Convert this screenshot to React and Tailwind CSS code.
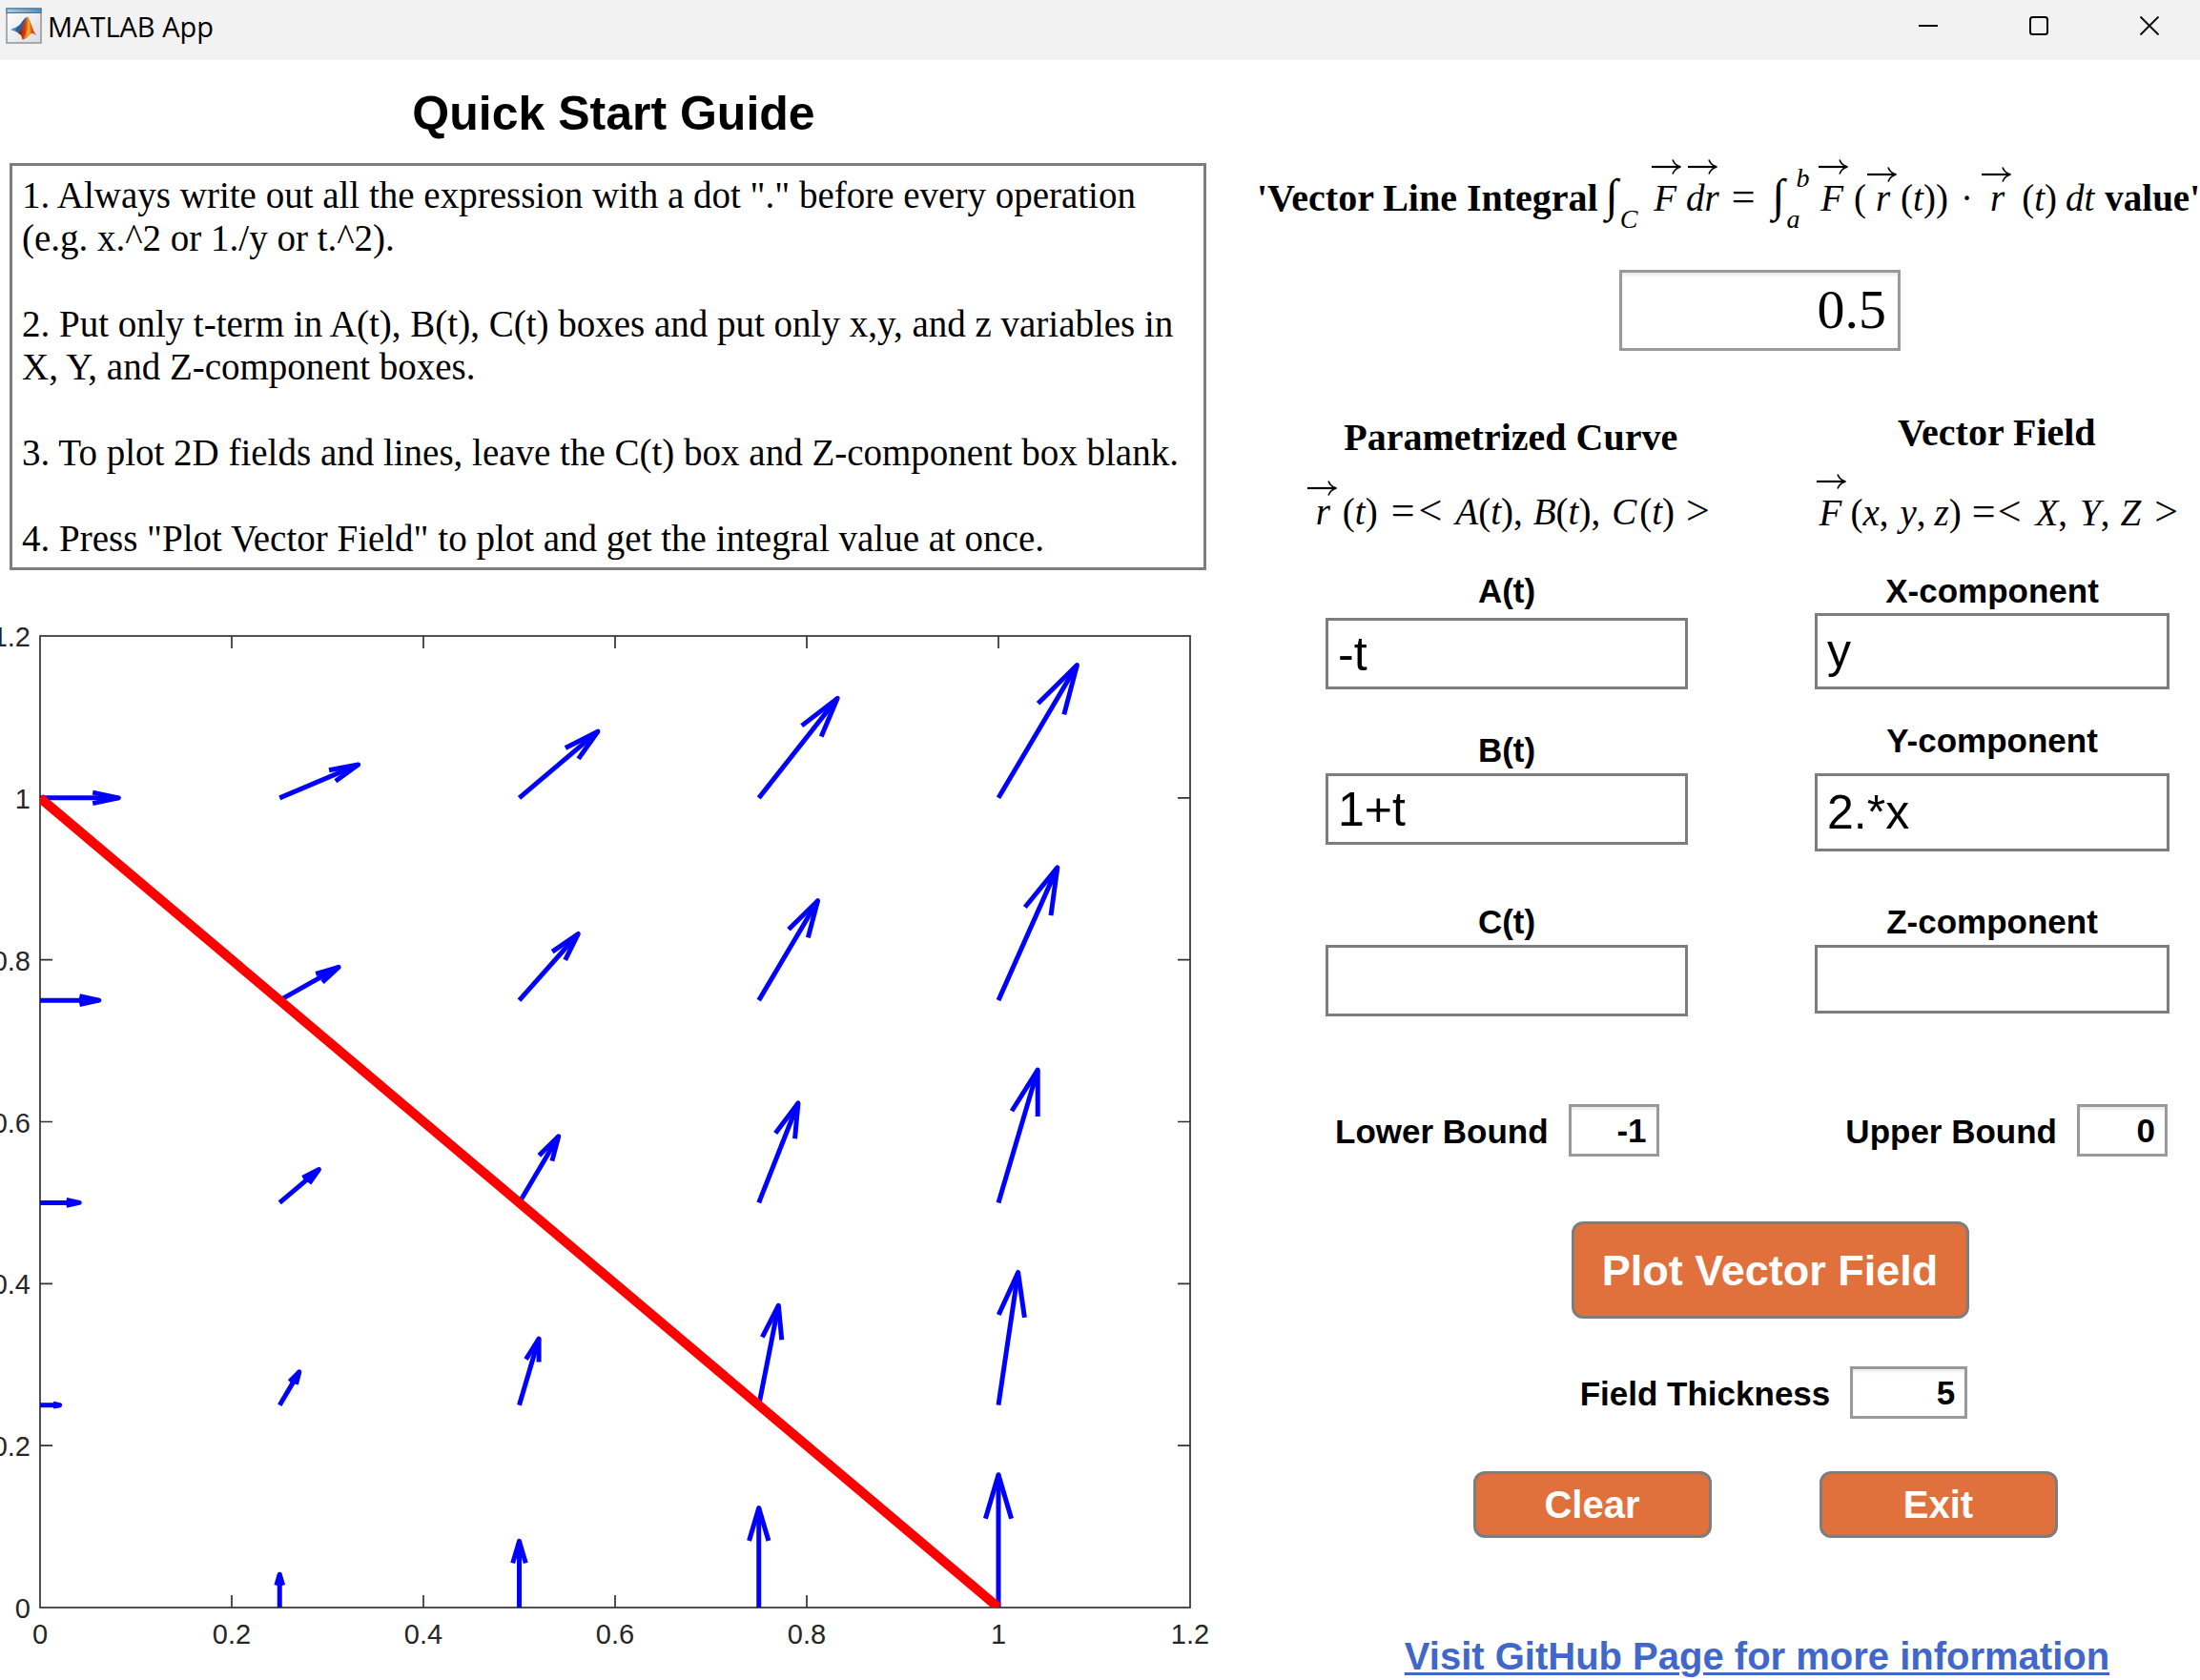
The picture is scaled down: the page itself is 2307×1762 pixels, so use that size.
import React from "react";

const SERIF = "font-['Liberation_Serif','Times_New_Roman',serif]";
const SANS = "font-['Liberation_Sans',Arial,sans-serif]";

const GUIDE = `1. Always write out all the expression with a dot "." before every operation (e.g. x.^2 or 1./y or t.^2).

2. Put only t-term in A(t), B(t), C(t) boxes and put only x,y, and z variables in X, Y, and Z-component boxes.

3. To plot 2D fields and lines, leave the C(t) box and Z-component box blank.

4. Press "Plot Vector Field" to plot and get the integral value at once.`;

function MatlabIcon() {
  return (
    <svg width="38" height="38" viewBox="0 0 38 38" aria-hidden="true">
      <defs>
        <linearGradient id="paper" x1="0" y1="0" x2="1" y2="1">
          <stop offset="0" stopColor="#ffffff" />
          <stop offset="1" stopColor="#dcdcdc" />
        </linearGradient>
        <linearGradient id="bar" x1="0" y1="0" x2="1" y2="0">
          <stop offset="0" stopColor="#a9d0ea" />
          <stop offset="1" stopColor="#4f8fc2" />
        </linearGradient>
        <linearGradient id="flame" x1="0" y1="0" x2="1" y2="0">
          <stop offset="0" stopColor="#7a1a10" />
          <stop offset="0.4" stopColor="#d8401a" />
          <stop offset="0.6" stopColor="#f6a21c" />
          <stop offset="0.75" stopColor="#e2541b" />
          <stop offset="1" stopColor="#a82a12" />
        </linearGradient>
      </defs>
      <rect x="1" y="1" width="36" height="36" fill="url(#paper)" stroke="#8f9499" strokeWidth="1.5" />
      <rect x="1" y="1" width="36" height="4.5" fill="url(#bar)" stroke="#3f6f96" strokeWidth="1" />
      <path d="M5 23 L12 20 C15 19 17 14 21 10 L19 19 L14 27 L11 25.500 Z" fill="#4a90c8" />
      <path d="M12 20 C15 19 18 13 22.500 9.500 L18 22 L13.500 26.500 L10 24 Z" fill="#2d5f94" />
      <path d="M13 27 C17 24 19 14 23 9.500 C26 12 28 24 32 29 C29 27 27 26 25 29 C22 31 20 34 17.500 33.500 C17 30 16 28 13 27 Z" fill="url(#flame)" />
      <path d="M23 10 C24 17 24 24 18 33 C21 33 23 29 25.500 28 C25 22 25 16 23 10 Z" fill="#f8b62a" opacity="0.55" />
    </svg>
  );
}

function TitleBar() {
  return (
    <header className="flex h-[63px] items-center justify-between bg-[#f2f2f2] pb-[9px] pl-[6px] pr-[43px]">
      <div className="flex items-center gap-[6px]">
        <MatlabIcon />
        <span className="pt-0.5 font-['Open_Sans','Noto_Sans',sans-serif] text-[29px] leading-[38px] text-black">MATLAB App</span>
      </div>
      <div className="flex items-center gap-24">
        <button type="button" aria-label="Minimize">
          <svg className="block" width="20" height="20" viewBox="0 0 20 20">
            <path d="M0 10H20" stroke="#000" strokeWidth="2" />
          </svg>
        </button>
        <button type="button" aria-label="Maximize">
          <svg className="block" width="20" height="20" viewBox="0 0 20 20">
            <rect x="1" y="1" width="18" height="18" rx="2.500" fill="none" stroke="#000" strokeWidth="2" />
          </svg>
        </button>
        <button type="button" aria-label="Close">
          <svg className="block" width="20" height="20" viewBox="0 0 20 20">
            <path d="M0.500 0.500L19.500 19.500M19.500 0.500L0.500 19.500" stroke="#111" strokeWidth="2" />
          </svg>
        </button>
      </div>
    </header>
  );
}

/* Vector field plot: F = <y, 2x> on a 5x5 grid, with the curve r(t) = <-t, 1+t> */
const LEFT = 42;
const RIGHT = 1248;
const TOP = 57;
const BOTTOM = 1076;
const px = (x) => LEFT + (x * (RIGHT - LEFT)) / 1.2;
const py = (y) => BOTTOM - (y * (BOTTOM - TOP)) / 1.2;
const TICKS = [0, 0.2, 0.4, 0.6, 0.8, 1, 1.2];
const GRID = [0, 0.25, 0.5, 0.75, 1];
const SCALE = 0.082;
const HEAD = 0.33;
const SPREAD = 0.25;

function Arrow({ x, y }) {
  const u = y * SCALE;
  const v = 2 * x * SCALE;
  const tx = x + u;
  const ty = y + v;
  const ax = tx - HEAD * (u + SPREAD * v);
  const ay = ty - HEAD * (v - SPREAD * u);
  const bx = tx - HEAD * (u - SPREAD * v);
  const by = ty - HEAD * (v + SPREAD * u);
  return (
    <g>
      <path d={`M${px(x)} ${py(y)}L${px(tx)} ${py(ty)}`} />
      <path d={`M${px(ax)} ${py(ay)}L${px(tx)} ${py(ty)}L${px(bx)} ${py(by)}`} />
    </g>
  );
}

function Plot() {
  return (
    <svg className={`mt-3 block w-full text-[29px] ${SANS}`} viewBox="0 0 1275 1130" role="img" aria-label="Vector field plot">
      <defs>
        <clipPath id="axes">
          <rect x={LEFT} y={TOP} width={RIGHT - LEFT} height={BOTTOM - TOP} />
        </clipPath>
      </defs>
      <g stroke="#333333" strokeWidth="1.7" fill="none">
        <rect x={LEFT} y={TOP} width={RIGHT - LEFT} height={BOTTOM - TOP} />
        {TICKS.slice(1, -1).map((t) => (
          <path
            key={t}
            d={`M${px(t)} ${BOTTOM}v-13M${px(t)} ${TOP}v13M${LEFT} ${py(t)}h13M${RIGHT} ${py(t)}h-13`}
          />
        ))}
      </g>
      <g fill="#262626">
        {TICKS.map((t) => (
          <text key={t} x={px(t)} y={1114} textAnchor="middle">{t}</text>
        ))}
        {TICKS.map((t) => (
          <text key={t} x={32} y={py(t) + 11} textAnchor="end">{t}</text>
        ))}
      </g>
      <g clipPath="url(#axes)">
        <g stroke="#0000ff" strokeWidth="5" fill="none" strokeLinejoin="round">
          {GRID.flatMap((x) =>
            GRID.filter((y) => x || y).map((y) => <Arrow key={`${x},${y}`} x={x} y={y} />)
          )}
        </g>
        <path d={`M${px(0)} ${py(1)}L${px(1)} ${py(0)}`} stroke="#ff0000" strokeWidth="10" />
      </g>
    </svg>
  );
}

function OverArrow({ className }) {
  return (
    <svg className={`absolute ${className}`} width="31" height="16" viewBox="0 0 31 16" aria-hidden="true">
      <path d="M0 8H29" stroke="#000" strokeWidth="2.200" fill="none" />
      <path d="M22 0.500C23.500 4.500 26 7 30.500 8C26 9 23.500 11.500 22 15.500" stroke="#000" strokeWidth="1.600" fill="none" />
    </svg>
  );
}

function VecF({ className = "" }) {
  return (
    <i className={`relative inline-block ${className}`}>
      F
      <OverArrow className="-left-0.5 -top-[11px]" />
    </i>
  );
}

function VecR({ className = "" }) {
  return (
    <i className={`relative inline-block ${className}`}>
      r
      <OverArrow className="-left-[9px] -top-[3px]" />
    </i>
  );
}

function OfT({ className = "", after = "" }) {
  return (
    <span className={className}>
      (<i>t</i>){after}
    </span>
  );
}

function Op({ className = "", children }) {
  return <span className={`text-[44px] leading-none ${className}`}>{children}</span>;
}

function Integral({ lower, upper, className = "" }) {
  return (
    <span className={`relative inline-block w-[61px] ${className}`}>
      <i className="pl-[10px] text-[48px] leading-none">∫</i>
      <i className="absolute left-[25px] top-[36px] text-[28px] leading-[32px]">{lower}</i>
      {upper && <i className="absolute left-[35px] -top-[7px] text-[28px] leading-[32px]">{upper}</i>}
    </span>
  );
}

const formula = `flex items-baseline whitespace-nowrap text-[39px] leading-[60px] ${SERIF}`;

function LineIntegralTitle() {
  return (
    <div className={`mt-[115px] h-[60px] pl-[43px] ${formula}`}>
      <b className="text-[40px]">'Vector Line Integral</b>
      <Integral lower="C" className="-ml-0.5" />
      <VecF className="w-[34px]" />
      <i className="relative">
        dr
        <OverArrow className="left-0.5 -top-[11px]" />
      </i>
      <Op className="ml-[13px]">=</Op>
      <Integral lower="a" upper="b" className="ml-2" />
      <VecF className="w-[35px]" />
      <span>(</span>
      <VecR className="ml-[10px]" />
      <OfT className="ml-[11px]" after=")" />
      <span className="ml-[13px]">·</span>
      <VecR className="ml-[18px]" />
      <OfT className="ml-[18px]" />
      <i className="ml-[9px]">dt</i>
      <b className="ml-[11px]">value'</b>
    </div>
  );
}

const textInput = "w-full rounded-none border-[3px] border-[#7d7d7d] bg-white px-[10px] text-[50px] leading-[60px] text-black outline-none";

function Field({ id, label, value, labelClass = "", inputClass }) {
  return (
    <>
      <label htmlFor={id} className={`text-center text-[35px] font-bold leading-[40px] ${labelClass}`}>{label}</label>
      <input id={id} type="text" defaultValue={value} className={`${textInput} ${inputClass}`} />
    </>
  );
}

function NumberField({ id, label, value, width }) {
  return (
    <div className="flex items-center gap-[21px]">
      <label htmlFor={id} className="whitespace-nowrap pt-0.5 text-[35px] font-bold leading-[40px]">{label}</label>
      <input
        id={id}
        type="text"
        inputMode="numeric"
        defaultValue={value}
        className={`h-[55px] rounded-none border-[3px] border-[#999999] bg-white pr-[10px] text-right text-[35px] font-bold leading-[40px] shadow-[inset_0_3px_3px_rgba(0,0,0,0.08)] outline-none ${width}`}
      />
    </div>
  );
}

const button = "rounded-xl border-[3px] border-[#7d7d7d] bg-[#e0713c] font-bold text-white";

export default function App() {
  return (
    <div className={`min-h-screen overflow-hidden bg-white text-black ${SANS}`}>
      <TitleBar />
      <main className="grid grid-cols-[1275fr_1032fr]">
        <section className="min-w-0">
          <h1 className="mt-[26px] pl-3 text-center text-[50px] font-bold leading-[60px]">Quick Start Guide</h1>
          <div className="mt-[22px] px-[10px]">
            <textarea
              readOnly
              rows={9}
              aria-label="Quick Start Guide"
              defaultValue={GUIDE}
              className={`block w-full resize-none overflow-hidden rounded-none border-[3px] border-[#7d7d7d] bg-white p-2 pl-[10px] text-[39px] leading-[45px] text-black outline-none ${SERIF}`}
            />
          </div>
          <Plot />
        </section>

        <section className="min-w-0">
          <LineIntegralTitle />

          <div className="mt-[45px] flex justify-center pl-[109px]">
            <input
              type="text"
              readOnly
              aria-label="Vector line integral value"
              defaultValue="0.5"
              className={`h-[85px] w-[295px] rounded-none border-[3px] border-[#999999] bg-white pb-0.5 pr-3 text-right text-[58px] leading-[64px] shadow-[inset_0_3px_3px_rgba(0,0,0,0.08)] outline-none ${SERIF}`}
            />
          </div>

          <div className="mt-[63px] grid grid-cols-[380fr_372fr] gap-x-[133px] pl-[119px] pr-[27px]">
            <div className="flex min-w-0 flex-col items-center pt-[5px]">
              <h2 className={`whitespace-nowrap text-[40px] font-bold leading-[46px] ${SERIF}`}>Parametrized Curve</h2>
              <div className={`mt-[25px] pl-1 ${formula}`}>
                <VecR />
                <OfT className="ml-[13px]" />
                <Op className="ml-[14px]">=</Op>
                <Op className="ml-1">&lt;</Op>
                <i className="ml-[14px]">A</i>
                <OfT after="," />
                <i className="ml-[11px]">B</i>
                <OfT after="," />
                <i className="ml-[12px]">C</i>
                <OfT className="ml-[3px]" />
                <Op className="ml-[12px]">&gt;</Op>
              </div>
            </div>
            <div className="flex min-w-0 flex-col items-center">
              <h2 className={`whitespace-nowrap text-[40px] font-bold leading-[46px] ${SERIF}`}>Vector Field</h2>
              <div className={`mt-[31px] pl-1 ${formula}`}>
                <VecF className="w-[33px]" />
                <span>(</span>
                <i>x</i>
                <span>,</span>
                <i className="ml-[12px]">y</i>
                <span>,</span>
                <i className="ml-[9px]">z</i>
                <span>)</span>
                <Op className="ml-[11px]">=</Op>
                <Op className="ml-0.5">&lt;</Op>
                <i className="ml-[15px]">X</i>
                <span>,</span>
                <i className="ml-[13px]">Y</i>
                <span>,</span>
                <i className="ml-[11px]">Z</i>
                <Op className="ml-[14px]">&gt;</Op>
              </div>
            </div>
          </div>

          <div className="mt-8 grid grid-cols-[380fr_372fr] gap-x-[133px] pl-[115px] pr-[32px]">
            <div className="flex flex-col">
              <Field id="a" label="A(t)" value="-t" inputClass="mt-2 h-[75px]" />
              <Field id="b" label="B(t)" value="1+t" labelClass="mt-11" inputClass="mt-1 h-[75px]" />
              <Field id="c" label="C(t)" value="" labelClass="mt-[61px]" inputClass="mt-1 h-[75px]" />
            </div>
            <div className="flex flex-col">
              <Field id="x" label="X-component" value="y" inputClass="mt-[3px] h-[80px]" />
              <Field id="y" label="Y-component" value="2.*x" labelClass="mt-[34px]" inputClass="mt-[14px] h-[82px]" />
              <Field id="z" label="Z-component" value="" labelClass="mt-[54px]" inputClass="mt-1 h-[72px]" />
            </div>
          </div>

          <div className="mt-[92px] flex justify-between pl-[125px] pr-[34px]">
            <NumberField id="lower" label="Lower Bound" value="-1" width="w-[95px]" />
            <NumberField id="upper" label="Upper Bound" value="0" width="w-[95px]" />
          </div>

          <div className="mt-[68px] flex justify-center pl-[130px]">
            <button type="button" className={`h-[102px] w-[417px] whitespace-nowrap pt-0.5 text-[45px] leading-[52px] ${button}`}>
              Plot Vector Field
            </button>
          </div>

          <div className="mt-[50px] flex justify-center pl-[138px]">
            <NumberField id="thickness" label="Field Thickness" value="5" width="w-[123px]" />
          </div>

          <div className="mt-[55px] flex justify-center gap-[113px] pl-[120px]">
            <button type="button" className={`h-[70px] w-[250px] text-[40px] leading-[46px] ${button}`}>Clear</button>
            <button type="button" className={`h-[70px] w-[250px] text-[40px] leading-[46px] ${button}`}>Exit</button>
          </div>

          <div className="mt-[101px] flex justify-center pl-[103px]">
            <a
              href="https://github.com"
              className="whitespace-nowrap text-[40px] font-bold leading-[46px] text-[#4067c9] underline decoration-[3px] underline-offset-[3px]"
            >
              Visit GitHub Page for more information
            </a>
          </div>
        </section>
      </main>
    </div>
  );
}
